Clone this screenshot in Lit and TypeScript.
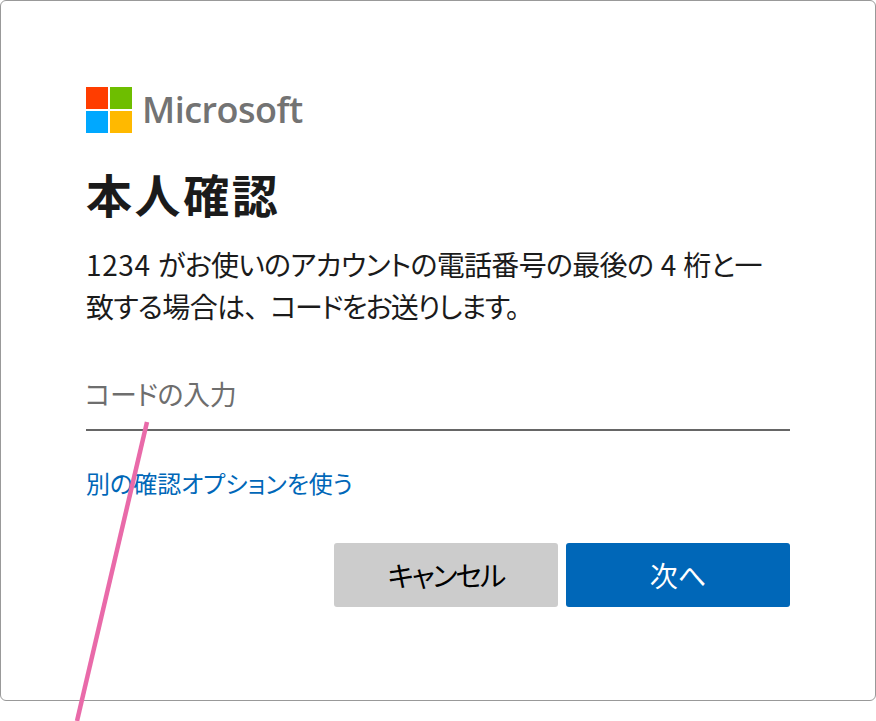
import { LitElement, html, css } from "lit";
import { customElement } from "lit/decorators.js";

@customElement("app-root")
export class AppRoot extends LitElement {
  static styles = css`
    :host {
      display: block;
      position: relative;
      width: 876px;
      height: 721px;
      overflow: hidden;
      background: #fff;
      font-family: "Noto Sans CJK JP", "Noto Sans", sans-serif;
      font-feature-settings: "palt";
    }
    .card {
      box-sizing: border-box;
      width: 876px;
      height: 701px;
      border: 1px solid #999;
      border-radius: 6px;
      background: #fff;
      padding: 86px 85px 0 85px;
      display: flex;
      flex-direction: column;
    }
    .logo {
      display: flex;
      align-items: center;
      gap: 10px;
      height: 46px;
    }
    .mark {
      display: block;
      flex: none;
    }
    .word {
      font-family: "Open Sans", sans-serif;
      font-weight: 600;
      font-size: 36px;
      letter-spacing: -0.5px;
      line-height: 46px;
      color: #737373;
    }
    h1 {
      margin: 28px 0 0;
      font-size: 46px;
      letter-spacing: 2.6px;
      font-weight: 700;
      line-height: 64px;
      color: #1b1b1b;
      font-feature-settings: normal;
    }
    .desc {
      margin: 18px 0 0;
      font-size: 28px;
      font-weight: 400;
      line-height: 42px;
      letter-spacing: -0.7px;
      word-spacing: 2px;
      color: #1b1b1b;
    }
    .num {
      letter-spacing: 0.6px;
    }
    .comma {
      font-feature-settings: normal;
      letter-spacing: -2px;
    }
    .tight {
      letter-spacing: -1.7px;
    }
    .field {
      margin-top: 42px;
      height: 62px;
      box-sizing: border-box;
      border-bottom: 2px solid #666;
      font-size: 27px;
      letter-spacing: -0.4px;
      line-height: 50px;
      text-indent: -1px;
      color: #6e6e6e;
    }
    .link {
      margin-top: 32px;
      font-size: 24px;
      line-height: 40px;
      color: #0067b8;
    }
    .actions {
      margin-top: 40px;
      display: flex;
      justify-content: flex-end;
      gap: 8px;
    }
    .btn {
      width: 224px;
      height: 64px;
      border-radius: 3px;
      display: flex;
      align-items: center;
      justify-content: center;
      font-size: 28px;
    }
    .cancel {
      background: #ccc;
      color: #000;
      letter-spacing: -2px;
    }
    .next {
      background: #0067b8;
      color: #fff;
    }
    .arrow {
      position: absolute;
      left: 0;
      top: 0;
      pointer-events: none;
    }
    .pointer {
      stroke: #e96aa9;
      stroke-width: 4.5;
    }
    .r {
      fill: #ff3d00;
    }
    .g {
      fill: #6ebe00;
    }
    .b {
      fill: #00a8ff;
    }
    .y {
      fill: #ffb900;
    }
  `;

  render() {
    return html`
      <div class="card">
        <div class="logo">
          <svg class="mark" width="46" height="46" viewBox="0 0 46 46">
            <rect class="r" x="0" y="0" width="22" height="22"></rect>
            <rect class="g" x="24" y="0" width="22" height="22"></rect>
            <rect class="b" x="0" y="24" width="22" height="22"></rect>
            <rect class="y" x="24" y="24" width="22" height="22"></rect>
          </svg>
          <span class="word">Microsoft</span>
        </div>
        <h1>本人確認</h1>
        <p class="desc"><span class="num">1234</span> がお使いのアカウントの電話番号の最後の 4 桁と一<br />致する場合は<span class="comma">、</span><span class="tight">コードをお送りします。</span></p>
        <div class="field">コードの入力</div>
        <div class="link">別の確認オプションを使う</div>
        <div class="actions">
          <div class="btn cancel">キャンセル</div>
          <div class="btn next">次へ</div>
        </div>
      </div>
      <svg class="arrow" width="876" height="721" viewBox="0 0 876 721">
        <line class="pointer" x1="147" y1="422" x2="77" y2="721"></line>
      </svg>
    `;
  }
}
